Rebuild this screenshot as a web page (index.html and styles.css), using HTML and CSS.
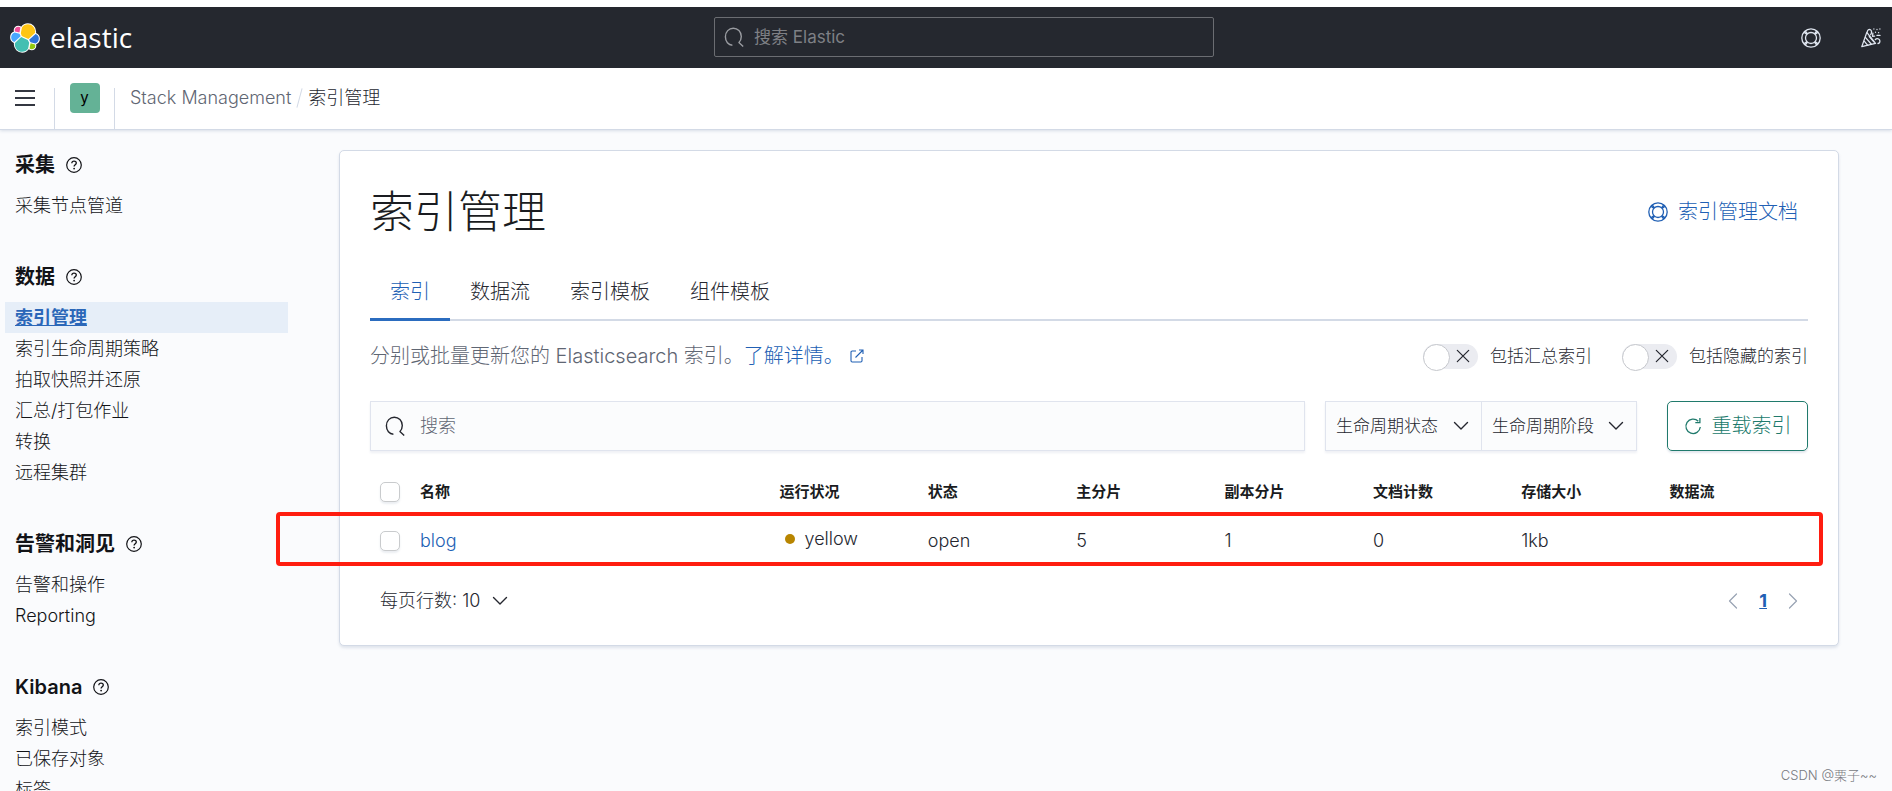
FILE: index.html
```html
<!DOCTYPE html>
<html lang="zh-CN">
<head>
<meta charset="utf-8">
<title>索引管理 - Elastic</title>
<link rel="stylesheet" href="styles.css">
</head>
<body>
<svg class="sprite" aria-hidden="true">
  <symbol id="i-search" viewBox="0 0 20 20"><path d="M8.4 18.2C4.4 18 1.4 14.6 1.4 9.8 1.4 4.8 4.9 1.2 9.3 1.2s8 3.6 8 8.4c0 2.500-.9 4.600-2.500 6.100M14.600 15.300l4.600 4.200" fill="none" stroke="currentColor" stroke-width="1.400"/></symbol>
  <symbol id="i-down" viewBox="0 0 16 16"><path d="M1.500 4.500L8 11l6.500-6.500" fill="none" stroke="currentColor" stroke-width="1.400" stroke-linecap="round" stroke-linejoin="round"/></symbol>
  <symbol id="i-left" viewBox="0 0 16 16"><path d="M11.500 1L4.500 8l7 7" fill="none" stroke="currentColor" stroke-width="1.200" stroke-linecap="round" stroke-linejoin="round"/></symbol>
  <symbol id="i-right" viewBox="0 0 16 16"><path d="M4.500 1l7 7-7 7" fill="none" stroke="currentColor" stroke-width="1.200" stroke-linecap="round" stroke-linejoin="round"/></symbol>
  <symbol id="i-cross" viewBox="0 0 16 16"><path d="M1.500 1.500l13 13M14.500 1.500l-13 13" fill="none" stroke="currentColor" stroke-width="1.400" stroke-linecap="round"/></symbol>
  <symbol id="i-question" viewBox="0 0 16 16"><circle cx="8" cy="8" r="7.300" fill="none" stroke="currentColor" stroke-width="1.200"/><path d="M5.800 6.200c0-1.200.9-2.100 2.200-2.100s2.300.8 2.300 2c0 1.700-2.200 1.700-2.200 3.400" fill="none" stroke="currentColor" stroke-width="1.300"/><circle cx="8.100" cy="11.600" r=".9" fill="currentColor"/></symbol>
  <symbol id="i-help" viewBox="0 0 20 20"><g fill="none" stroke="currentColor" stroke-width="1.300"><circle cx="10" cy="10" r="9.200"/><circle cx="10" cy="10" r="5.500"/><path d="M3 4.200l3 2.400M4.200 3l2.400 3M17 4.200l-3 2.400M15.800 3l-2.400 3M3 15.800l3-2.400M4.200 17l2.400-3M17 15.800l-3-2.400M15.800 17l-2.400-3"/></g></symbol>
  <symbol id="i-cheer" viewBox="0 0 20 20"><g fill="none" stroke="currentColor" stroke-width="1.300" stroke-linejoin="round" stroke-linecap="round"><path d="M5.800 4.400L.8 18.600l13.700-3.200z"/><path d="M4.400 9.400l6 6.800M3.200 13.200l3.600 4.200M8.300 8.500l4.400 5.200"/><path d="M6.200 4.200C6.400 2 8 .9 9.500 1.800c1.600 1 1.200 3.300.2 4.900M13.600 8.100l-2.100.2.400-3.200"/><path d="M14.300 11.600c1-1.500 3.300-1.400 4.200.2.900 1.700.2 3.400-1.500 3.700"/><path d="M12.900 1v.1M16 1.500v.1M18.900 1v.1M14.500 4.200v.1M17.600 4.600v.1M16 7.400h3"/></g></symbol>
  <symbol id="i-popout" viewBox="0 0 14 14"><path d="M6 2H2.200Q1 2 1 3.200v8.600Q1 13 2.200 13h8.600q1.200 0 1.200-1.200V8M5.500 8.500L13 1M9 1h4v4" fill="none" stroke="currentColor" stroke-width="1.100"/></symbol>
  <symbol id="i-refresh" viewBox="0 0 18 18"><path d="M14.300 4.300A7.200 7.200 0 1 0 16.300 10M15.900 1v4.600h-4.600" fill="none" stroke="currentColor" stroke-width="1.300"/></symbol>
</svg>

<header class="topbar">
  <a class="brand" href="#">
    <svg class="brand-mark" viewBox="0 0 32 32" aria-hidden="true">
      <g stroke="#fff" stroke-width="2.200" fill="#fff">
        <path d="M12.580 13.787l7.002 3.211 7.066-6.213a7.849 7.849 0 00.152-1.557c0-4.287-3.464-7.775-7.722-7.775a7.700 7.700 0 00-6.371 3.373l-1.176 6.125z"/>
        <path d="M5.333 21.228A8.170 8.170 0 005.180 22.800c0 4.306 3.479 7.810 7.757 7.810a7.731 7.731 0 006.403-3.398l1.166-6.106-1.556-2.992-7.030-3.223z"/>
        <path d="M5.288 9.067l4.800 1.138L11.140 4.710a3.798 3.798 0 00-2.317-.785c-2.096 0-3.798 1.717-3.798 3.826 0 .455.090.900.263 1.316z"/>
        <path d="M4.871 10.214c-2.142.715-3.640 2.783-3.640 5.060a5.360 5.360 0 003.394 4.997l6.731-6.140-1.235-2.663z"/>
        <path d="M20.870 27.211a3.769 3.769 0 002.301.790c2.096 0 3.800-1.717 3.800-3.827 0-.466-.085-.912-.250-1.330l-4.797-1.133z"/>
        <path d="M21.848 20.563l5.280 1.241c2.142-.716 3.641-2.784 3.641-5.061a5.350 5.350 0 00-3.430-4.976l-6.906 6.091z"/>
      </g>
      <path fill="#fec514" d="M12.580 13.787l7.002 3.211 7.066-6.213a7.849 7.849 0 00.152-1.557c0-4.287-3.464-7.775-7.722-7.775a7.700 7.700 0 00-6.371 3.373l-1.176 6.125z"/>
      <path fill="#43bfb2" d="M5.333 21.228A8.170 8.170 0 005.180 22.800c0 4.306 3.479 7.810 7.757 7.810a7.731 7.731 0 006.403-3.398l1.166-6.106-1.556-2.992-7.030-3.223z"/>
      <path fill="#f04e98" d="M5.288 9.067l4.800 1.138L11.140 4.710a3.798 3.798 0 00-2.317-.785c-2.096 0-3.798 1.717-3.798 3.826 0 .455.090.900.263 1.316z"/>
      <path fill="#48a8ff" d="M4.871 10.214c-2.142.715-3.640 2.783-3.640 5.060a5.360 5.360 0 003.394 4.997l6.731-6.140-1.235-2.663z"/>
      <path fill="#93c90e" d="M20.870 27.211a3.769 3.769 0 002.301.790c2.096 0 3.800-1.717 3.800-3.827 0-.466-.085-.912-.250-1.330l-4.797-1.133z"/>
      <path fill="#2f75d8" d="M21.848 20.563l5.280 1.241c2.142-.716 3.641-2.784 3.641-5.061a5.350 5.350 0 00-3.430-4.976l-6.906 6.091z"/>
    </svg>
    <span class="brand-name">elastic</span>
  </a>
  <label class="global-search">
    <svg class="icon-20" aria-hidden="true"><use href="#i-search"/></svg>
    <input type="search" placeholder="搜索 Elastic" aria-label="搜索 Elastic">
  </label>
  <div class="top-actions">
    <button type="button" aria-label="帮助"><svg class="icon-20"><use href="#i-help"/></svg></button>
    <button type="button" aria-label="新闻源"><svg class="icon-20"><use href="#i-cheer"/></svg></button>
  </div>
</header>

<div class="crumbbar">
  <button class="menu-btn" type="button" aria-label="切换主导航">
    <svg class="icon-20" viewBox="0 0 20 20"><path d="M0 3h20M0 10h20M0 17h20" stroke="currentColor" stroke-width="2"/></svg>
  </button>
  <div class="space-slot"><button class="space" type="button">y</button></div>
  <nav class="crumbs" aria-label="面包屑">
    <a href="#">Stack Management</a>
    <span class="slash" aria-hidden="true"></span>
    <span class="current">索引管理</span>
  </nav>
</div>

<div class="page">
  <nav class="sidebar" aria-label="管理">
    <section>
      <h2>采集 <svg class="icon-16" aria-hidden="true"><use href="#i-question"/></svg></h2>
      <a href="#">采集节点管道</a>
    </section>
    <section>
      <h2>数据 <svg class="icon-16" aria-hidden="true"><use href="#i-question"/></svg></h2>
      <a class="active" href="#">索引管理</a>
      <a href="#">索引生命周期策略</a>
      <a href="#">拍取快照并还原</a>
      <a href="#">汇总/打包作业</a>
      <a href="#">转换</a>
      <a href="#">远程集群</a>
    </section>
    <section>
      <h2>告警和洞见 <svg class="icon-16" aria-hidden="true"><use href="#i-question"/></svg></h2>
      <a href="#">告警和操作</a>
      <a href="#">Reporting</a>
    </section>
    <section>
      <h2>Kibana <svg class="icon-16" aria-hidden="true"><use href="#i-question"/></svg></h2>
      <a href="#">索引模式</a>
      <a href="#">已保存对象</a>
      <a href="#">标签</a>
    </section>
  </nav>

  <main class="panel">
    <div class="title-row">
      <h1>索引管理</h1>
      <a class="docs" href="#"><svg class="icon-20" aria-hidden="true"><use href="#i-help"/></svg>索引管理文档</a>
    </div>

    <div class="tabs" role="tablist">
      <button type="button" role="tab" class="selected" aria-selected="true">索引</button>
      <button type="button" role="tab">数据流</button>
      <button type="button" role="tab">索引模板</button>
      <button type="button" role="tab">组件模板</button>
    </div>

    <div class="intro">
      <p>分别或批量更新您的 Elasticsearch 索引。<a href="#">了解详情。<svg class="icon-14" aria-hidden="true"><use href="#i-popout"/></svg></a></p>
      <div class="switches">
        <label class="switch"><input type="checkbox" role="switch"><span class="track"><svg class="icon-14" aria-hidden="true"><use href="#i-cross"/></svg></span>包括汇总索引</label>
        <label class="switch"><input type="checkbox" role="switch"><span class="track"><svg class="icon-14" aria-hidden="true"><use href="#i-cross"/></svg></span>包括隐藏的索引</label>
      </div>
    </div>

    <div class="filters">
      <label class="table-search">
        <svg class="icon-20" aria-hidden="true"><use href="#i-search"/></svg>
        <input type="search" placeholder="搜索" aria-label="搜索">
      </label>
      <div class="filter-group">
        <button type="button">生命周期状态<svg class="icon-16" aria-hidden="true"><use href="#i-down"/></svg></button>
        <button type="button">生命周期阶段<svg class="icon-16" aria-hidden="true"><use href="#i-down"/></svg></button>
      </div>
      <button class="reload" type="button"><svg class="icon-18" aria-hidden="true"><use href="#i-refresh"/></svg>重载索引</button>
    </div>

    <div class="table-wrap">
      <table>
        <colgroup><col class="c-check"><col class="c-name"><col><col><col><col><col><col><col></colgroup>
        <thead>
          <tr><th><input type="checkbox" aria-label="选择所有行"></th><th>名称</th><th>运行状况</th><th>状态</th><th>主分片</th><th>副本分片</th><th>文档计数</th><th>存储大小</th><th>数据流</th></tr>
        </thead>
        <tbody>
          <tr><td><input type="checkbox" aria-label="选择 blog"></td><td><a href="#">blog</a></td><td><span class="health">yellow</span></td><td>open</td><td>5</td><td>1</td><td>0</td><td>1kb</td><td></td></tr>
        </tbody>
      </table>
      <div class="highlight"></div>
    </div>

    <div class="footer">
      <button class="page-size" type="button">每页行数: 10<svg class="icon-16" aria-hidden="true"><use href="#i-down"/></svg></button>
      <div class="pager">
        <button type="button" aria-label="上一页"><svg class="icon-16"><use href="#i-left"/></svg></button>
        <a href="#">1</a>
        <button type="button" aria-label="下一页"><svg class="icon-16"><use href="#i-right"/></svg></button>
      </div>
    </div>
  </main>
</div>
<div class="watermark">CSDN @栗子~~</div>
</body>
</html>
```
FILE: styles.css
```css
* { box-sizing: border-box; }

html, body { height: 100%; }

body {
  margin: 0;
  padding-top: 7px;
  position: relative;
  overflow: hidden;
  display: flex;
  flex-direction: column;
  background: #fff;
  color: #25272f;
  font: 300 18px/24px Inter, "Noto Sans CJK SC", sans-serif;
}

a { color: #2160b4; text-decoration: none; }

button, input { font: inherit; color: inherit; }

button {
  display: flex;
  align-items: center;
  padding: 0;
  border: 0;
  background: none;
}

h1, h2, p { margin: 0; }

svg { display: block; flex: none; }

.sprite { position: absolute; width: 0; height: 0; }
.icon-14 { width: 14px; height: 14px; }
.icon-16 { width: 16px; height: 16px; }
.icon-18 { width: 18px; height: 18px; }
.icon-20 { width: 20px; height: 20px; }

/* Top bar */
.topbar {
  flex: none;
  height: 61px;
  padding: 0 11px 0 10px;
  display: grid;
  grid-template-columns: 19fr 500px 18fr;
  align-items: center;
  background: #25282f;
  color: #dfe5ef;
}

.brand { display: flex; align-items: center; gap: 10px; color: #fff; }
.brand-mark { width: 30px; height: 30px; }
.brand-name { font: 400 28px/32px "Open Sans", "Noto Sans", sans-serif; padding-bottom: 2px; }

.global-search {
  height: 40px;
  display: flex;
  align-items: center;
  gap: 10px;
  padding: 0 9px;
  margin-bottom: 1px;
  border: 1px solid #6b6d72;
  border-radius: 2px;
  color: #9a9ca1;
  font-size: 17px;
}

.global-search input, .table-search input {
  flex: 1;
  min-width: 0;
  padding: 0;
  border: 0;
  outline: 0;
  background: none;
}

.global-search input::placeholder { color: #7e8085; font-weight: 400; }

.top-actions { display: flex; justify-content: flex-end; gap: 40px; }

/* Breadcrumb bar */
.crumbbar {
  flex: none;
  height: 61px;
  padding-left: 15px;
  display: flex;
  align-items: center;
  background: #fff;
  box-shadow: 0 1px 0 #d3dae6, 0 2px 3px rgba(120, 140, 170, 0.25);
  position: relative;
}

.menu-btn { margin-right: 19px; padding-bottom: 2px; color: #343741; }

.space-slot {
  align-self: flex-end;
  height: 41px;
  width: 61px;
  display: flex;
  justify-content: center;
  border: solid #d3dae6;
  border-width: 0 1px;
}

.space {
  width: 30px;
  height: 30px;
  margin-top: -5px;
  justify-content: center;
  border-radius: 4px;
  background: #64b296;
  color: #000;
  font-size: 15px;
  font-weight: 400;
}

.crumbs { display: flex; align-items: center; gap: 8px; margin-left: 15px; padding-bottom: 2px; }
.crumbs a { color: #5f6673; }
.slash { width: 1px; height: 20px; background: #d3dae6; transform: rotate(15deg); }

/* Page */
.page {
  flex: 1;
  min-height: 0;
  display: flex;
  align-items: flex-start;
  gap: 51px;
  padding: 21px 53px 0 5px;
  background: #fafbfd;
}

.sidebar {
  flex: none;
  width: 283px;
  padding-top: 3px;
  display: flex;
  flex-direction: column;
  gap: 44px;
  color: #121317;
}

.sidebar h2 {
  display: flex;
  align-items: center;
  gap: 11px;
  margin-bottom: 13px;
  padding-left: 10px;
  font-size: 20px;
  line-height: 24px;
  font-weight: 700;
}

.sidebar section:last-child h2 { font-weight: 600; }

.sidebar a {
  display: block;
  padding-left: 10px;
  line-height: 31px;
  color: inherit;
}

.sidebar a.active {
  background: #e6eef8;
  color: #2b67b8;
  font-weight: 700;
  text-decoration: underline;
}

.panel {
  flex: 1;
  min-width: 0;
  padding: 31px 30px 24px;
  border: 1px solid #d3dae6;
  border-radius: 5px;
  background: #fff;
  box-shadow: 0 2px 3px rgba(120, 140, 170, 0.2);
}

.title-row { display: flex; align-items: center; justify-content: space-between; color: #1a1c21; }
.title-row h1 { font-size: 44px; line-height: 60px; font-weight: 300; }
.docs { display: flex; align-items: center; gap: 10px; padding-right: 10px; font-size: 20px; }

.tabs {
  display: flex;
  margin-top: 20px;
  height: 59px;
  box-shadow: inset 0 -2px #d3dae6;
}

.tabs button { padding: 0 20px; font-size: 20px; }
.tabs .selected { color: #2160b4; box-shadow: inset 0 -3px #2b6cbf; }

.intro {
  display: flex;
  align-items: center;
  justify-content: space-between;
  margin-top: 20px;
  height: 30px;
}

.intro p { font-size: 20px; color: #5f6673; }
.intro p .icon-14 { display: inline-block; margin-left: 6px; }

.switches { display: flex; gap: 30px; font-size: 17px; }
.switch { position: relative; display: flex; align-items: center; gap: 12px; }
.switch input { position: absolute; opacity: 0; }

.track {
  position: relative;
  width: 55px;
  height: 25px;
  padding-right: 8px;
  display: flex;
  align-items: center;
  justify-content: flex-end;
  border-radius: 13px;
  background: #ebecf1;
}

.track::before {
  content: "";
  position: absolute;
  left: 0;
  top: 0;
  width: 25px;
  height: 25px;
  border: 1px solid #c5c7cc;
  border-radius: 50%;
  background: #fff;
}

.filters { display: flex; margin-top: 30px; height: 50px; }

.table-search {
  flex: 1;
  display: flex;
  align-items: center;
  gap: 15px;
  padding: 0 14px;
  border: 1px solid #e0e4ee;
  background: #fbfcfd;
  box-shadow: 0 2px 2px rgba(120, 140, 170, 0.12);
}

.table-search input::placeholder { color: #5f6673; }

.filter-group {
  display: flex;
  margin-left: 20px;
  border: 1px solid #e0e4ee;
  background: #fbfcfd;
  box-shadow: 0 2px 2px rgba(120, 140, 170, 0.12);
  font-size: 17px;
}

.filter-group button { width: 155px; padding: 0 12px 0 10px; justify-content: space-between; }
.filter-group button + button { border-left: 1px solid #e0e4ee; }

.reload {
  width: 141px;
  margin-left: 30px;
  justify-content: center;
  gap: 10px;
  border: 1px solid #207a6c;
  border-radius: 5px;
  color: #207a6c;
  font-size: 20px;
  box-shadow: 0 2px 2px rgba(120, 140, 170, 0.2);
}

/* Table */
.table-wrap { position: relative; margin-top: 20px; }

table { width: 100%; table-layout: fixed; border-collapse: collapse; }
.c-check { width: 40px; }
.c-name { width: 25%; }
th, td { padding: 0 10px; text-align: left; }
th { height: 41px; font-size: 15px; font-weight: 700; color: #1a1c21; }
td { height: 57px; }

table input {
  appearance: none;
  display: block;
  width: 20px;
  height: 20px;
  margin: 0;
  border: 1px solid #c9cbcd;
  border-radius: 5px;
  background: #fff;
  box-shadow: 0 2px 2px rgba(120, 140, 170, 0.15);
}

.health { display: flex; align-items: center; gap: 10px; padding: 0 0 4px 5px; }
.health::before { content: ""; width: 10px; height: 10px; border-radius: 50%; background: #b88500; }

.highlight {
  position: absolute;
  left: -94px;
  right: -15px;
  top: 41px;
  height: 54px;
  border: 4px solid #ff1d10;
  border-radius: 4px;
  pointer-events: none;
}

.footer {
  display: flex;
  align-items: center;
  justify-content: space-between;
  height: 40px;
  margin-top: 12px;
  padding: 0 7px 0 10px;
}

.page-size { gap: 12px; }
.pager { display: flex; align-items: center; gap: 18px; color: #98a2b3; }
.pager a { font-weight: 700; text-decoration: underline; }

.watermark {
  position: absolute;
  right: 15px;
  bottom: 4px;
  color: #77797d;
  font-size: 13px;
}
```
